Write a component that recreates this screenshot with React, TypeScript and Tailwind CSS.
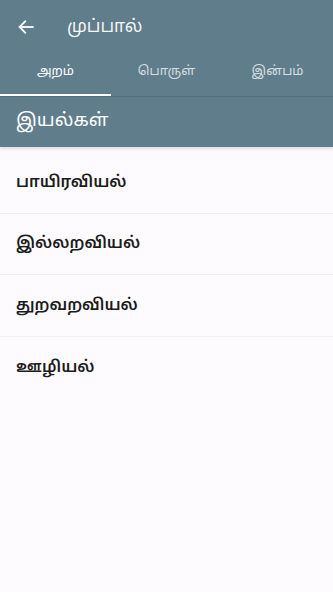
import React from 'react';

const sections = ['பாயிரவியல்', 'இல்லறவியல்', 'துறவறவியல்', 'ஊழியல்'];
const tabs = ['அறம்', 'பொருள்', 'இன்பம்'];

const App: React.FC = () => {
  return (
    <div className="h-[592px] w-full bg-[#fdfbfd] flex flex-col" style={{ fontFamily: '"Noto Sans Tamil", "Noto Sans Tamil UI", "Lohit Tamil", "Noto Sans", Roboto, sans-serif' }}>
      {/* toolbar */}
      <div className="bg-[#607d8b] text-white">
        <div className="h-[50px] flex items-center pt-[3px]">
          <div className="w-[52px] pl-[17px] flex items-center">
            <svg width="18" height="18" viewBox="0 0 24 24" fill="none" stroke="white" strokeWidth="2.4" strokeLinecap="square">
              <path d="M21 12H4" />
              <path d="M11 4.5 3.5 12l7.5 7.5" />
            </svg>
          </div>
          <h1 className="ml-[15px] text-[17.5px] font-normal leading-none text-white/95 pt-[2px]">முப்பால்</h1>
        </div>
        <div className="h-[46px] flex">
          {tabs.map((t, i) => (
            <div key={t} className="flex-1 flex flex-col">
              <div className={`flex-1 flex items-center justify-center text-[13px] pt-[1px] ${i === 0 ? 'text-white' : 'text-white/75'}`}>{t}</div>
              <div className={`h-[2px] ${i === 0 ? 'bg-white' : 'bg-transparent'}`} />
            </div>
          ))}
        </div>
      </div>
      <div className="h-[1px] bg-[#52707e]" />
      {/* section heading */}
      <div className="h-[50px] bg-[#607d8b] flex items-center px-4 shadow-[0_2px_3px_rgba(0,0,0,0.12)] relative">
        <h2 className="text-[18.5px] text-white leading-none">இயல்கள்</h2>
      </div>
      {/* list */}
      <ul className="flex flex-col mt-[5px]">
        {sections.map((s, i) => (
          <li key={s} className={`h-[61.5px] flex items-center px-4 pt-[1px] ${i < sections.length - 1 ? 'border-b border-[#f1eef1]' : ''}`}>
            <span className="text-[16px] font-semibold text-[#1b1b1b]">{s}</span>
          </li>
        ))}
      </ul>
    </div>
  );
};

export default App;
